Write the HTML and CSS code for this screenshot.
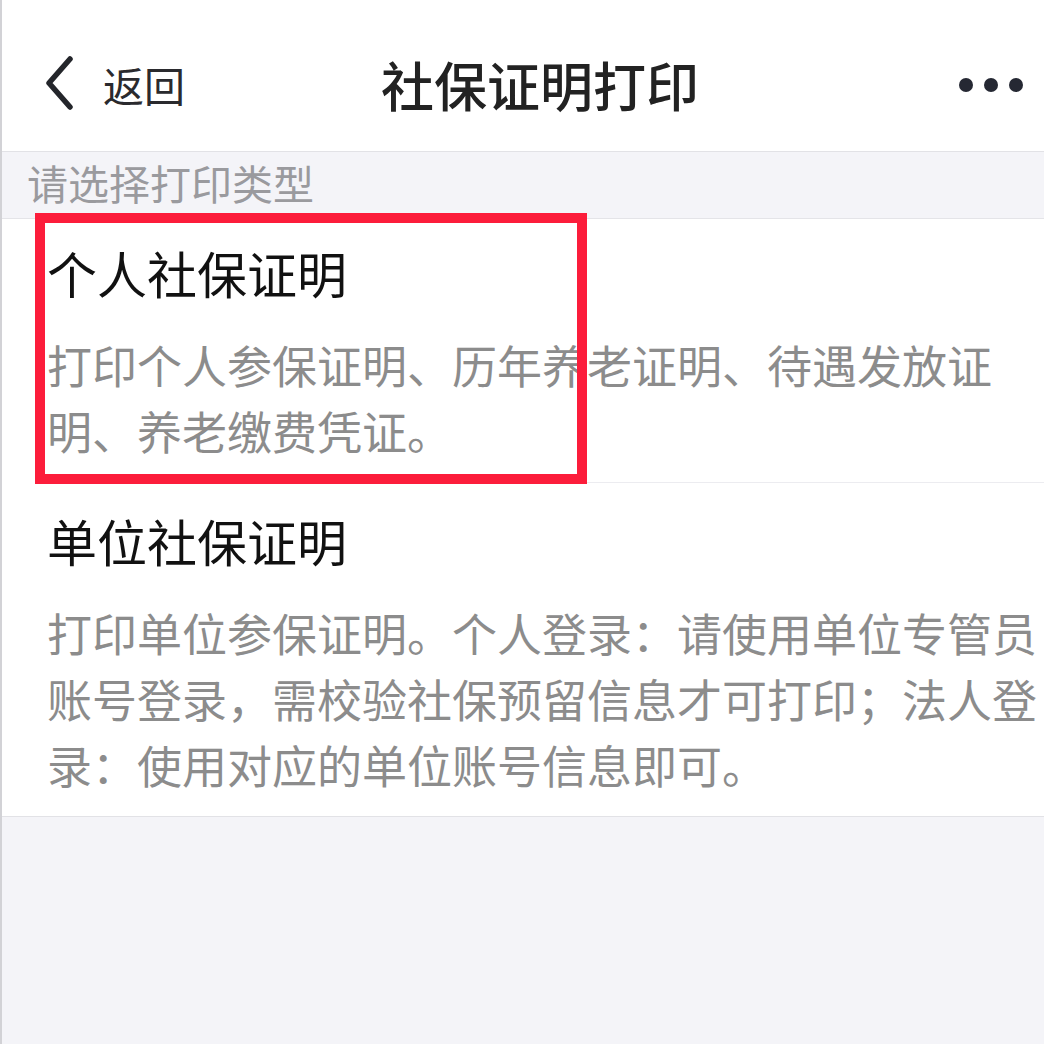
FILE: index.html
```html
<!DOCTYPE html>
<html lang="zh-CN">
<head>
<meta charset="utf-8">
<title>社保证明打印</title>
<link rel="stylesheet" href="styles.css">
</head>
<body>
<div class="page">
  <header class="nav">
    <div class="nav-left">
      <svg class="chev" width="34" height="54" viewBox="0 0 34 54"><path d="M27 3 L6 27 L27 51" fill="none" stroke="#24262b" stroke-width="5.5" stroke-linecap="round" stroke-linejoin="round"/></svg>
      <span class="back">返回</span>
    </div>
    <h1 class="nav-title">社保证明打印</h1>
    <div class="nav-right">
      <span class="dot"></span><span class="dot"></span><span class="dot"></span>
    </div>
  </header>
  <div class="section-label">请选择打印类型</div>
  <ul class="list">
    <li class="item">
      <div class="item-title">个人社保证明</div>
      <div class="item-desc">打印个人参保证明、历年养老证明、待遇发放证明、养老缴费凭证。</div>
    </li>
    <li class="item">
      <div class="item-title">单位社保证明</div>
      <div class="item-desc">打印单位参保证明。个人登录：请使用单位专管员账号登录，需校验社保预留信息才可打印；法人登录：使用对应的单位账号信息即可。</div>
    </li>
  </ul>
  <div class="highlight"></div>
</div>
</body>
</html>
```

FILE: styles.css
```css
* { box-sizing: border-box; }
html, body {
  margin: 0;
  padding: 0;
  background: #f4f4f8;
}
body {
  font-family: "Noto Sans CJK SC", "Noto Sans", sans-serif;
}
.page {
  position: relative;
  min-height: 1044px;
  border-left: 2px solid #d2d2d6;
  background: #f4f4f8;
}
.nav {
  height: 152px;
  background: #fff;
  border-bottom: 1px solid #e2e2e6;
  display: flex;
  align-items: center;
  padding: 18px 0 0 0;
}
.nav-left {
  width: 230px;
  display: flex;
  align-items: center;
  padding-left: 41px;
}
.chev { display: block; margin-top: -4px; }
.back {
  font-size: 41px;
  color: #2a2a2e;
  margin-left: 26px;
  line-height: 1;
}
.nav-title {
  flex: 1;
  margin: 0;
  text-align: center;
  font-size: 53px;
  font-weight: 500;
  color: #222;
  padding-left: 34px;
  line-height: 1;
}
.nav-right {
  width: 230px;
  display: flex;
  justify-content: flex-end;
  gap: 11px;
  padding-right: 21px;
}
.dot {
  width: 14px;
  height: 14px;
  border-radius: 50%;
  background: #252833;
}
.section-label {
  height: 67px;
  padding-left: 25px;
  font-size: 41px;
  line-height: 60px;
  color: #9a9a9e;
  border-bottom: 1px solid #e4e4e8;
}
.list {
  list-style: none;
  margin: 0;
  padding: 0 0 0 45px;
  background: #fff;
  border-bottom: 1px solid #e2e2e6;
}
.item {
  padding: 23px 0 18px 0;
}
.item + .item {
  border-top: 1px solid #ececf0;
  padding-top: 27px;
}
.item-title {
  font-size: 50px;
  line-height: 60px;
  color: #111;
}
.item-desc {
  margin-top: 30px;
  font-size: 45px;
  line-height: 66px;
  color: #8c8c8c;
}
.highlight {
  position: absolute;
  left: 33px;
  top: 213px;
  width: 552px;
  height: 271px;
  border: 10px solid #fc1d3b;
  pointer-events: none;
}
```
